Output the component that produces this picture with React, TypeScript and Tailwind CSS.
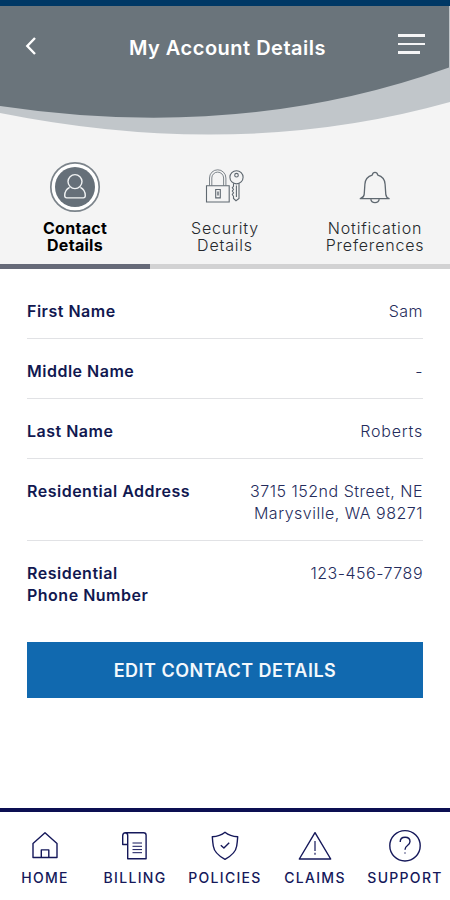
import type { ReactNode } from "react";
import clsx from "clsx";

type Tab = { lines: string[]; tracking: string[]; icon: ReactNode; active?: boolean };
type Detail = { label: string[]; value: string[]; labelTracking: string; valueTracking: string };
type NavItem = { label: string; tracking: string; icon: ReactNode };

function ContactIcon() {
  return (
    <svg width="52" height="52" viewBox="0 0 52 52" fill="none">
      <circle cx="26" cy="26" r="24.2" fill="#fff" stroke="#7c848b" strokeWidth="1.7" />
      <circle cx="26" cy="26" r="20" fill="#667079" />
      <g stroke="#f1f3f4" strokeWidth="1.4" strokeLinejoin="round">
        <circle cx="26" cy="20.6" r="7" />
        <path d="M20.6 26.4c-3 1.600-4.900 4.600-4.900 8.200 0 1.600.6 2.300 2 2.300h16.600c1.400 0 2-.7 2-2.300 0-3.600-1.900-6.600-4.900-8.200" />
      </g>
    </svg>
  );
}

function SecurityIcon() {
  return (
    <svg width="52" height="52" viewBox="0 0 52 52" fill="none" stroke="#5f6870" strokeWidth="1.1">
      <path d="M7.500 24.700h22.700v16.300H7.500z" />
      <path d="M10.500 24.500V17a8.200 8.200 0 0 1 16.400 0v7.500M12.800 24.500V17a5.900 5.900 0 0 1 11.800 0v7.500" strokeWidth=".8" />
      <path d="M16.700 28.500h4.600v8.400h-4.600z" />
      <path d="M19 30.500v4" strokeWidth="1.400" />
      <circle cx="37.500" cy="16.300" r="6.600" />
      <circle cx="37.500" cy="14.200" r="1.800" />
      <path d="M34.500 22.300v3l-1.200 1.500 1.200 1.500-1.200 1.800 1.200 1.700-1.200 1.800 1.200 1.700v2.200l2.500 2.200 3-2.200V22.300M37.400 24.500v11.500" />
    </svg>
  );
}

function BellIcon() {
  return (
    <svg width="52" height="52" viewBox="0 0 52 52" fill="none" stroke="#5f6870" strokeWidth="1.3" strokeLinejoin="round">
      <path d="M11.300 37.700h28.800c-2.200-.9-3.100-2.200-3.300-4.300l-.7-10.200c-.4-5-3-7.900-7.300-9-.4-1.800-1.500-2.800-2.800-2.800s-2.400 1-2.800 2.800c-4.300 1.100-6.900 4-7.300 9l-.7 10.200c-.2 2.100-1.500 3.400-3.900 4.300z" />
      <path d="M21.800 38.200c.3 2.200 1.800 3.400 4.200 3.400s3.900-1.200 4.200-3.400" />
    </svg>
  );
}

function NavIcon({ children }: { children: ReactNode }) {
  return (
    <svg width="34" height="34" viewBox="0 0 34 34" fill="none" stroke="#15185a" strokeWidth="1.4" strokeLinejoin="round">
      {children}
    </svg>
  );
}

const tabs: Tab[] = [
  { lines: ["Contact", "Details"], tracking: ["tracking-[0.3px]", "tracking-[0.3px]"], icon: <ContactIcon />, active: true },
  { lines: ["Security", "Details"], tracking: ["tracking-[0.8px]", "tracking-[0.8px]"], icon: <SecurityIcon /> },
  { lines: ["Notification", "Preferences"], tracking: ["tracking-[0.8px]", "tracking-[0.8px]"], icon: <BellIcon /> },
];

const details: Detail[] = [
  { label: ["First Name"], value: ["Sam"], labelTracking: "tracking-[0.5px]", valueTracking: "tracking-[0.5px]" },
  { label: ["Middle Name"], value: ["-"], labelTracking: "tracking-[0.5px]", valueTracking: "tracking-[0.5px]" },
  { label: ["Last Name"], value: ["Roberts"], labelTracking: "tracking-[0.5px]", valueTracking: "tracking-[0.8px]" },
  {
    label: ["Residential Address"],
    value: ["3715 152nd Street, NE", "Marysville, WA 98271"],
    labelTracking: "tracking-[0.5px]",
    valueTracking: "tracking-[0.5px]",
  },
  { label: ["Residential", "Phone Number"], value: ["123-456-7789"], labelTracking: "tracking-[0.5px]", valueTracking: "tracking-[0.5px]" },
];

const navItems: NavItem[] = [
  {
    label: "HOME",
    tracking: "tracking-[1.3px]",
    icon: (
      <NavIcon>
        <path d="M5 15.500 17 4.700l12 10.800v14H5z" />
        <path d="M13.300 29.500v-7.600h7.500v7.600" />
      </NavIcon>
    ),
  },
  {
    label: "BILLING",
    tracking: "tracking-[1.3px]",
    icon: (
      <NavIcon>
        <path d="M9.500 16.500H4.700V7.800c0-2 1-3.100 2.900-3.100h18c1.600 0 2.500.9 2.500 2.500v23.500H9.700V7.600c0-1.600-.7-2.700-2-2.900" />
        <path d="M14.500 15h9.500M14.500 18.300h9.500M14.500 21.600h9.500M14.500 24.700h9.500" strokeWidth="1" />
      </NavIcon>
    ),
  },
  {
    label: "POLICIES",
    tracking: "tracking-[1.3px]",
    icon: (
      <NavIcon>
        <path d="M17 4.200c3.400 2.800 7.600 4.300 12.700 4.600-.2 3.100-.5 6.200-1 9.200-.8 5.600-5.100 9.800-11.700 13.300C10.400 27.800 6.100 23.600 5.300 18c-.5-3-.8-6.100-1-9.200C9.400 8.500 13.600 7 17 4.200z" />
        <path d="m12.800 17.300 3.100 2.800 5.300-5.300" />
      </NavIcon>
    ),
  },
  {
    label: "CLAIMS",
    tracking: "tracking-[1.3px]",
    icon: (
      <NavIcon>
        <path d="M17 4.700 32.700 31H1.300z" />
        <path d="M17 13v10M17 24.700v2" strokeWidth="1.200" />
      </NavIcon>
    ),
  },
  {
    label: "SUPPORT",
    tracking: "tracking-[1.3px]",
    icon: (
      <NavIcon>
        <circle cx="17" cy="17.800" r="15.200" />
        <path d="M12.200 14c0-2.900 1.900-4.700 4.900-4.700s4.900 1.700 4.900 4.300c0 4-4.900 3.900-4.900 7.700v.5" />
        <circle cx="17" cy="25" r=".7" fill="#15185a" stroke="none" />
      </NavIcon>
    ),
  },
];

function Header() {
  return (
    <header className="grid h-[140px] border-t-[6px] border-[#003865]">
      <svg className="col-start-1 row-start-1" width="450" height="134" viewBox="0 6 450 134">
        <path d="M0 6H450V102Q240 161 0 113z" fill="#c1c6ca" />
        <path d="M0 6H449V67.500Q241 142 0 106z" fill="#6a747b" />
      </svg>
      <div className="col-start-1 row-start-1 flex h-[80px] items-center justify-between pr-[25px] pl-[25px]">
        <svg width="32" height="20" viewBox="0 0 32 20" fill="none" stroke="#fff" strokeWidth="2.400">
          <path d="M10 2 2.300 10 10 18" />
        </svg>
        <h1 className="pt-1 text-[20px] leading-6 font-semibold tracking-[0.5px] text-white">My Account Details</h1>
        <div className="flex w-[27px] flex-col gap-[6px] pb-1">
          <span className="h-[2.500px] bg-[#f5f5f6]" />
          <span className="h-[2.500px] bg-[#f5f5f6]" />
          <span className="h-[2.500px] w-[22px] bg-[#f5f5f6]" />
        </div>
      </div>
    </header>
  );
}

export default function App() {
  return (
    <div className="flex h-[900px] w-[450px] flex-col overflow-hidden bg-white font-['Inter',sans-serif]">
      <div className="bg-[#f4f4f4]">
        <Header />
        <div className="grid h-[129px] grid-cols-3">
          {tabs.map((tab) => (
            <div
              key={tab.lines[0]}
              className={clsx(
                "flex flex-col items-center border-b-[5px] pt-[21px]",
                tab.active ? "border-[#666a78]" : "border-[#d2d2d3]"
              )}
            >
              {tab.icon}
              <div
                className={clsx(
                  "mt-[7px] flex flex-col items-center text-[16px] leading-[17px]",
                  tab.active ? "font-bold text-black" : "font-light text-[#25282c]"
                )}
              >
                {tab.lines.map((line, i) => (
                  <span key={line} className={tab.tracking[i]}>{line}</span>
                ))}
              </div>
            </div>
          ))}
        </div>
      </div>

      <main className="flex-1 px-[27px] pt-[10px]">
        {details.map((row) => (
          <div
            key={row.label[0] + row.value[0]}
            className="flex justify-between border-b border-[#e1e2e5] pt-[21px] pb-4 text-[16px] leading-[22px] last-of-type:border-0"
          >
            <div className={clsx("flex flex-col font-semibold text-[#111850]", row.labelTracking)}>
              {row.label.map((line) => (
                <span key={line}>{line}</span>
              ))}
            </div>
            <div className={clsx("flex flex-col items-end font-light text-[#252c5c]", row.valueTracking)}>
              {row.value.map((line) => (
                <span key={line}>{line}</span>
              ))}
            </div>
          </div>
        ))}
        <button className="mt-5 h-[56px] w-full bg-[#1169af] text-[18px] font-semibold tracking-[0.5px] text-[#f4f8fc]">
          EDIT CONTACT DETAILS
        </button>
      </main>

      <nav className="grid h-[92px] grid-cols-5 border-t-4 border-[#0c0f52] pt-4">
        {navItems.map((item) => (
          <div key={item.label} className="flex flex-col items-center">
            {item.icon}
            <span className={clsx("mt-[7px] text-[14px] leading-[18px] font-medium text-[#15185a]", item.tracking)}>
              {item.label}
            </span>
          </div>
        ))}
      </nav>
    </div>
  );
}
